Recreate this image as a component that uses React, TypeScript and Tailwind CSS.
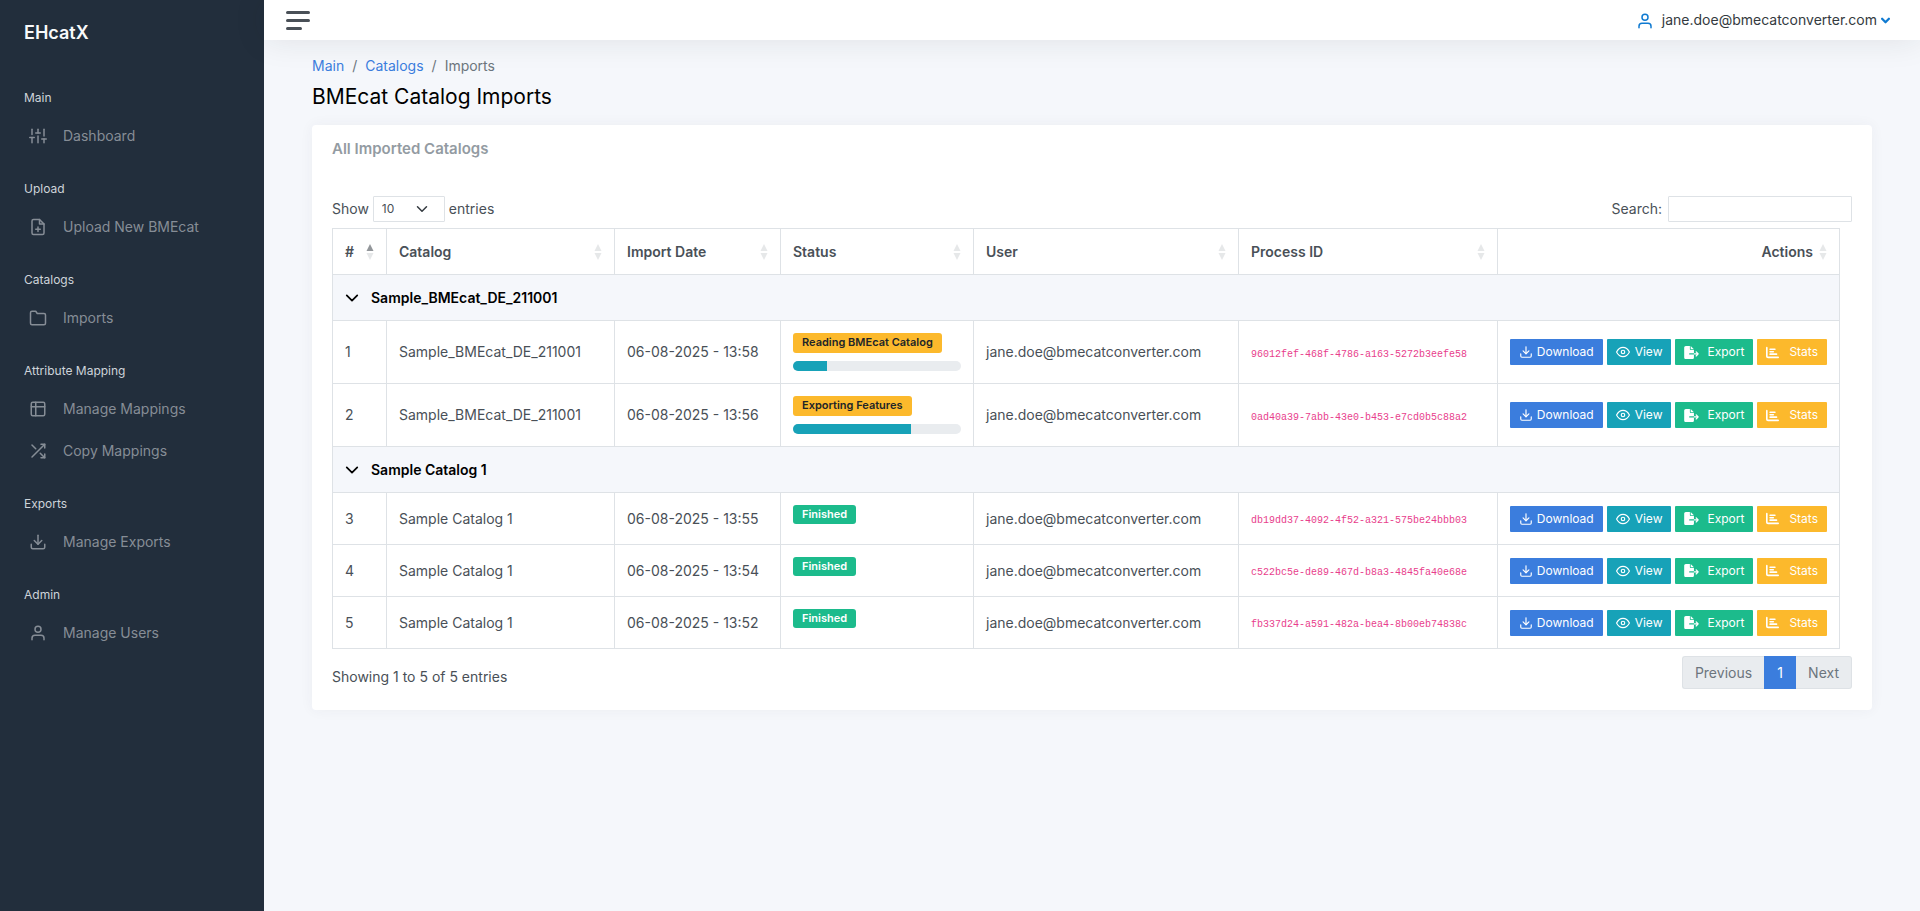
import { useState } from "react";
import type { ReactNode } from "react";
import { FiDownload, FiEye, FiFilePlus, FiFolder, FiShuffle, FiSliders, FiUser } from "react-icons/fi";
import { FaChartBar, FaFileExport } from "react-icons/fa6";

const TableIcon = () => (
  <svg width="18" height="18" viewBox="0 0 24 24" fill="none" stroke="currentColor" strokeWidth="2" strokeLinecap="round" strokeLinejoin="round">
    <rect x="3" y="3" width="18" height="18" rx="2" />
    <path d="M9 3v18M3 9h18" />
  </svg>
);

const Chevron = ({ className, size = 12, stroke = 2 }: { className?: string; size?: number; stroke?: number }) => (
  <svg className={className} width={size} height={size} viewBox="0 0 16 16" fill="none" stroke="currentColor" strokeWidth={stroke} strokeLinecap="round" strokeLinejoin="round">
    <path d="M2 5l6 6 6-6" />
  </svg>
);

const menu = [
  { title: "Main", links: [{ label: "Dashboard", icon: <FiSliders size={18} /> }] },
  { title: "Upload", links: [{ label: "Upload New BMEcat", icon: <FiFilePlus size={18} /> }] },
  { title: "Catalogs", links: [{ label: "Imports", icon: <FiFolder size={18} /> }] },
  {
    title: "Attribute Mapping",
    links: [
      { label: "Manage Mappings", icon: <TableIcon /> },
      { label: "Copy Mappings", icon: <FiShuffle size={18} /> },
    ],
  },
  { title: "Exports", links: [{ label: "Manage Exports", icon: <FiDownload size={18} /> }] },
  { title: "Admin", links: [{ label: "Manage Users", icon: <FiUser size={18} /> }] },
];

type Import = {
  id: number;
  date: string;
  status: string;
  progress?: number;
  process: string;
};

const user = "jane.doe@bmecatconverter.com";

const groups: { catalog: string; imports: Import[] }[] = [
  {
    catalog: "Sample_BMEcat_DE_211001",
    imports: [
      { id: 1, date: "06-08-2025 - 13:58", status: "Reading BMEcat Catalog", progress: 20, process: "96012fef-468f-4786-a163-5272b3eefe58" },
      { id: 2, date: "06-08-2025 - 13:56", status: "Exporting Features", progress: 70, process: "0ad40a39-7abb-43e0-b453-e7cd0b5c88a2" },
    ],
  },
  {
    catalog: "Sample Catalog 1",
    imports: [
      { id: 3, date: "06-08-2025 - 13:55", status: "Finished", process: "db19dd37-4092-4f52-a321-575be24bbb03" },
      { id: 4, date: "06-08-2025 - 13:54", status: "Finished", process: "c522bc5e-de89-467d-b8a3-4845fa40e68e" },
      { id: 5, date: "06-08-2025 - 13:52", status: "Finished", process: "fb337d24-a591-482a-bea4-8b00eb74838c" },
    ],
  },
];

const columns = [
  { label: "#", width: "w-[54px]" },
  { label: "Catalog", width: "w-[228px]" },
  { label: "Import Date", width: "w-[166px]" },
  { label: "Status", width: "w-[193px]" },
  { label: "User", width: "w-[265px]" },
  { label: "Process ID", width: "w-[259px]" },
  { label: "Actions", width: "w-[342px]" },
];

const Sidebar = () => (
  <aside className="w-[264px] shrink-0 bg-[#222e3c]">
    <a href="#" className="block px-6 pt-[19px] pb-[19px] text-lg leading-7 font-semibold text-[#f8f9fa]">
      EHcatX
    </a>
    <nav>
      {menu.map((section) => (
        <div key={section.title}>
          <h2 className="px-6 pt-[23px] pb-2 text-xs leading-[18px] text-[#ced4da]">{section.title}</h2>
          <ul>
            {section.links.map((link) => (
              <li key={link.label}>
                <a href="#" className="flex h-[42px] items-center gap-4 pr-6 pl-[29px] text-sm text-[#868d96]">
                  {link.icon}
                  {link.label}
                </a>
              </li>
            ))}
          </ul>
        </div>
      ))}
    </nav>
  </aside>
);

const Topbar = () => (
  <header className="flex h-10 items-center justify-between bg-white pr-[30px] pl-[22px] shadow-[0_0_32px_rgba(33,37,41,0.1)]">
    <button aria-label="Toggle sidebar" className="flex flex-col gap-[5px]">
      <span className="h-[3px] w-6 rounded-full bg-[#495057]" />
      <span className="h-[3px] w-6 rounded-full bg-[#495057]" />
      <span className="h-[3px] w-4 rounded-full bg-[#495057]" />
    </button>
    <button className="flex items-center text-sm text-[#343a40]">
      <FiUser size={18} className="mt-0.5 mr-2 text-[#0f7ad1]" />
      {user}
      <Chevron className="ml-1 text-[#0f7ad1]" size={9} stroke={4} />
    </button>
  </header>
);

const SortArrows = ({ active }: { active?: boolean }) => (
  <svg width="8" height="18" viewBox="0 0 8 18" className="shrink-0">
    <path d="M4 1L7.5 8H0.5z" fill={active ? "#92969a" : "#e6e8e9"} />
    <path d="M0.5 10H7.5L4 17z" fill="#e6e8e9" />
  </svg>
);

const ActionButton = ({ className, children }: { className: string; children: ReactNode }) => (
  <button className={`flex h-[26px] items-center rounded-[1px] px-[9px] text-xs text-white ${className}`}>{children}</button>
);

const ImportRow = ({ item, catalog }: { item: Import; catalog: string }) => {
  const running = item.progress !== undefined;

  return (
    <tr className={running ? "h-[63px]" : "h-[52px]"}>
      <td className="border border-[#dee2e6] px-3">{item.id}</td>
      <td className="border border-[#dee2e6] px-3">{catalog}</td>
      <td className="border border-[#dee2e6] px-3">{item.date}</td>
      <td className="border border-[#dee2e6] px-3 pt-3 align-top">
        <span
          className={`block w-fit rounded-[3px] px-[9px] text-[11px] font-semibold ${
            running ? "bg-[#fcb92c] pb-0.5 leading-[18px] text-[#212529]" : "bg-[#1cbb8c] pb-px leading-[18px] text-white"
          }`}
        >
          {item.status}
        </span>
        {running && (
          <div className="mt-2 h-2.5 w-[168px] max-w-full overflow-hidden rounded-full bg-[#e9ecef]">
            <div className="h-full bg-[#17a2b8]" style={{ width: `${item.progress}%` }} />
          </div>
        )}
      </td>
      <td className="border border-[#dee2e6] px-3">{user}</td>
      <td className="border border-[#dee2e6] px-3">
        <code className="font-['Liberation_Mono',monospace] text-[10px] text-[#e83e8c]">{item.process}</code>
      </td>
      <td className="border border-[#dee2e6] px-3">
        <div className="flex justify-end gap-1">
          <ActionButton className="gap-1 bg-[#3b7ddd]">
            <FiDownload size={14} /> Download
          </ActionButton>
          <ActionButton className="gap-[5px] bg-[#17a2b8]">
            <FiEye size={14} /> View
          </ActionButton>
          <ActionButton className="gap-2 bg-[#1cbb8c]">
            <FaFileExport className="h-[13px] w-[15px]" /> Export
          </ActionButton>
          <ActionButton className="gap-2.5 bg-[#fcb92c]">
            <FaChartBar size={13} /> Stats
          </ActionButton>
        </div>
      </td>
    </tr>
  );
};

const ImportsTable = () => {
  const [closed, setClosed] = useState<string[]>([]);

  const toggle = (catalog: string) =>
    setClosed((prev) => (prev.includes(catalog) ? prev.filter((c) => c !== catalog) : [...prev, catalog]));

  return (
    <div className="mt-1.5 pr-3">
      <table className="w-full table-fixed border-collapse">
        <thead>
          <tr className="h-[46px]">
            {columns.map((column, i) => (
              <th key={column.label} className={`border border-[#dee2e6] px-3 text-left font-semibold ${column.width}`}>
                <div className={`flex items-center ${i === columns.length - 1 ? "justify-end gap-1.5" : "justify-between"}`}>
                  {column.label}
                  <SortArrows active={i === 0} />
                </div>
              </th>
            ))}
          </tr>
        </thead>
        {groups.map((group) => (
          <tbody key={group.catalog}>
            <tr className="h-[46px] bg-[#f5f7fb]">
              <td colSpan={columns.length} className="border border-[#dee2e6] px-3">
                <button onClick={() => toggle(group.catalog)} className="flex items-center gap-3 font-semibold text-black">
                  <Chevron size={14} />
                  {group.catalog}
                </button>
              </td>
            </tr>
            {!closed.includes(group.catalog) &&
              group.imports.map((item) => <ImportRow key={item.id} item={item} catalog={group.catalog} />)}
          </tbody>
        ))}
      </table>
    </div>
  );
};

const App = () => {
  return (
    <div className="flex min-h-screen bg-[#f5f7fb] font-[Inter,sans-serif] text-sm text-[#495057]">
      <Sidebar />
      <div className="min-w-0 flex-1">
        <Topbar />
        <main className="px-12 pt-[15px]">
          <nav aria-label="breadcrumb" className="flex gap-2 leading-[21px] text-[#6c757d]">
            <a href="#" className="text-[#3b7ddd]">Main</a>
            <span>/</span>
            <a href="#" className="text-[#3b7ddd]">Catalogs</a>
            <span>/</span>
            <span>Imports</span>
          </nav>
          <h1 className="mt-[7px] text-[21px] leading-7 text-black">BMEcat Catalog Imports</h1>

          <section className="mt-3.5 rounded bg-white px-5 pt-[13px] pb-[21px] shadow-[0_0_14px_rgba(53,64,82,0.05)]">
            <h2 className="text-[15px] leading-[21px] font-semibold text-[#939ba2]">All Imported Catalogs</h2>
            <div className="mt-[37px] flex items-center justify-between">
              <label className="flex items-center gap-1">
                Show
                <span className="relative">
                  <select className="block h-[26px] w-[72px] appearance-none rounded-[1px] border border-[#dee2e6] bg-white px-2 text-xs">
                    <option>10</option>
                    <option>25</option>
                    <option>50</option>
                    <option>100</option>
                  </select>
                  <Chevron className="pointer-events-none absolute top-[7px] right-[17px] text-[#343a40]" />
                </span>
                entries
              </label>
              <label className="flex items-center gap-1.5">
                Search:
                <input type="search" className="h-[26px] w-[184px] rounded-[1px] border border-[#dee2e6] bg-white px-2 text-xs" />
              </label>
            </div>

            <ImportsTable />

            <div className="mt-[7px] flex items-center justify-between">
              <p className="pt-2">Showing 1 to 5 of 5 entries</p>
              <div className="flex h-[33px] text-[#6c757d]">
                <button className="rounded-l-[3px] border border-r-0 border-[#dee2e6] bg-[#e9ecef] px-3">Previous</button>
                <button className="w-8 bg-[#3b7ddd] text-white">1</button>
                <button className="rounded-r-[3px] border border-l-0 border-[#dee2e6] bg-[#e9ecef] px-3">Next</button>
              </div>
            </div>
          </section>
        </main>
      </div>
    </div>
  );
};

export default App;
